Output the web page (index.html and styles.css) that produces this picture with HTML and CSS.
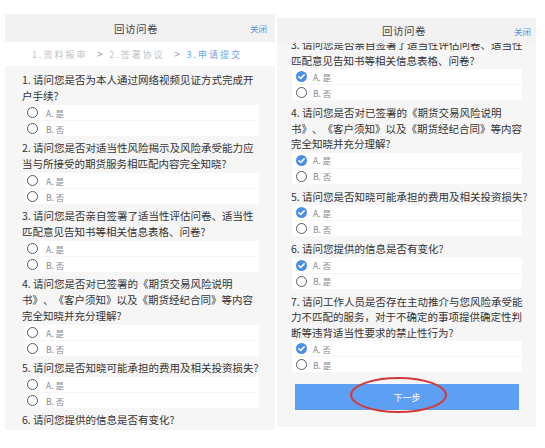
FILE: index.html
```html
<!DOCTYPE html>
<html lang="zh-CN">
<head>
<meta charset="utf-8">
<title>回访问卷</title>
<link rel="stylesheet" href="styles.css">
</head>
<body>
<div class="page">
  <section class="phone phone-left">
    <header class="nav">
      <span></span>
      <span class="nav-title">回访问卷</span>
      <span class="nav-close">关闭</span>
    </header>
    <div class="steps">
      <span class="step">1.资料报审</span>
      <span class="arrow">&gt;</span>
      <span class="step">2.签署协议</span>
      <span class="arrow">&gt;</span>
      <span class="step step-active">3.申请提交</span>
    </div>
    <div class="body">
      <div class="q">
        <p class="q-text">1. 请问您是否为本人通过网络视频见证方式完成开<br>户手续?</p>
        <div class="opt"><span class="radio"></span><span class="opt-label">A. 是</span></div>
        <div class="opt"><span class="radio"></span><span class="opt-label">B. 否</span></div>
      </div>
      <div class="q">
        <p class="q-text">2. 请问您是否对适当性风险揭示及风险承受能力应<br>当与所接受的期货服务相匹配内容完全知晓?</p>
        <div class="opt"><span class="radio"></span><span class="opt-label">A. 是</span></div>
        <div class="opt"><span class="radio"></span><span class="opt-label">B. 否</span></div>
      </div>
      <div class="q">
        <p class="q-text">3. 请问您是否亲自签署了适当性评估问卷、适当性<br>匹配意见告知书等相关信息表格、问卷?</p>
        <div class="opt"><span class="radio"></span><span class="opt-label">A. 是</span></div>
        <div class="opt"><span class="radio"></span><span class="opt-label">B. 否</span></div>
      </div>
      <div class="q">
        <p class="q-text">4. 请问您是否对已签署的《期货交易风险说明<br>书》、《客户须知》以及《期货经纪合同》等内容<br>完全知晓并充分理解?</p>
        <div class="opt"><span class="radio"></span><span class="opt-label">A. 是</span></div>
        <div class="opt"><span class="radio"></span><span class="opt-label">B. 否</span></div>
      </div>
      <div class="q">
        <p class="q-text">5. 请问您是否知晓可能承担的费用及相关投资损失?</p>
        <div class="opt"><span class="radio"></span><span class="opt-label">A. 是</span></div>
        <div class="opt"><span class="radio"></span><span class="opt-label">B. 否</span></div>
      </div>
      <div class="q">
        <p class="q-text">6. 请问您提供的信息是否有变化?</p>
      </div>
    </div>
  </section>

  <section class="phone phone-right">
    <header class="nav">
      <span></span>
      <span class="nav-title">回访问卷</span>
      <span class="nav-close">关闭</span>
    </header>
    <div class="body">
      <div class="scroll">
        <div class="q">
          <p class="q-text">3. 请问您是否亲自签署了适当性评估问卷、适当性<br>匹配意见告知书等相关信息表格、问卷?</p>
          <div class="opt"><span class="radio checked"><svg viewBox="0 0 10 10"><path d="M2.6 5.2 L4.3 6.8 L7.4 3.5"/></svg></span><span class="opt-label">A. 是</span></div>
          <div class="opt"><span class="radio"></span><span class="opt-label">B. 否</span></div>
        </div>
        <div class="q">
          <p class="q-text">4. 请问您是否对已签署的《期货交易风险说明<br>书》、《客户须知》以及《期货经纪合同》等内容<br>完全知晓并充分理解?</p>
          <div class="opt"><span class="radio checked"><svg viewBox="0 0 10 10"><path d="M2.6 5.2 L4.3 6.8 L7.4 3.5"/></svg></span><span class="opt-label">A. 是</span></div>
          <div class="opt"><span class="radio"></span><span class="opt-label">B. 否</span></div>
        </div>
        <div class="q">
          <p class="q-text">5. 请问您是否知晓可能承担的费用及相关投资损失?</p>
          <div class="opt"><span class="radio checked"><svg viewBox="0 0 10 10"><path d="M2.6 5.2 L4.3 6.8 L7.4 3.5"/></svg></span><span class="opt-label">A. 是</span></div>
          <div class="opt"><span class="radio"></span><span class="opt-label">B. 否</span></div>
        </div>
        <div class="q">
          <p class="q-text">6. 请问您提供的信息是否有变化?</p>
          <div class="opt"><span class="radio checked"><svg viewBox="0 0 10 10"><path d="M2.6 5.2 L4.3 6.8 L7.4 3.5"/></svg></span><span class="opt-label">A. 否</span></div>
          <div class="opt"><span class="radio"></span><span class="opt-label">B. 是</span></div>
        </div>
        <div class="q">
          <p class="q-text">7. 请问工作人员是否存在主动推介与您风险承受能<br>力不匹配的服务，对于不确定的事项提供确定性判<br>断等违背适当性要求的禁止性行为?</p>
          <div class="opt"><span class="radio checked"><svg viewBox="0 0 10 10"><path d="M2.6 5.2 L4.3 6.8 L7.4 3.5"/></svg></span><span class="opt-label">A. 否</span></div>
          <div class="opt"><span class="radio"></span><span class="opt-label">B. 是</span></div>
        </div>
        <div class="btn-next">下一步<span class="mark"></span></div>
      </div>
    </div>
  </section>
</div>
</body>
</html>
```

FILE: styles.css
```css
* { box-sizing: border-box; }

html, body {
  margin: 0;
  padding: 0;
  background: #ffffff;
}

body {
  width: 545px;
  height: 448px;
  overflow: hidden;
  font-family: "Noto Sans CJK SC", "Noto Sans", sans-serif;
  color: #333333;
  text-spacing-trim: space-all;
}

.page {
  display: flex;
  align-items: flex-start;
}

.phone {
  display: flex;
  flex-direction: column;
  overflow: hidden;
  background: #f6f6f6;
}

.phone-left {
  margin-left: 5px;
  margin-top: 14px;
  width: 270px;
  height: 416px;
}

.phone-right {
  margin-left: 2px;
  margin-top: 18px;
  width: 259px;
  height: 409px;
}

/* nav bar */
.nav {
  display: grid;
  grid-template-columns: 1fr auto 1fr;
  align-items: center;
  background: #f2f2f2;
  flex: none;
}

.phone-left .nav { height: 28px; padding-right: 8px; }
.phone-right .nav { height: 25px; padding-right: 5px; }

.nav-title {
  font-size: 10.5px;
  color: #444444;
  letter-spacing: 0.5px;
}

.nav-close {
  justify-self: end;
  font-size: 8.5px;
  color: #5a95de;
}

/* steps */
.steps {
  flex: none;
  height: 24px;
  background: #ffffff;
  display: flex;
  align-items: center;
  justify-content: center;
  padding-right: 6px;
  font-size: 9px;
  letter-spacing: 2px;
  color: #c4c4c4;
}

.step-active { color: #6aa4e6; }

.arrow {
  font-weight: bold;
  color: #b0b0b0;
  margin: 0 6px 0 9px;
  letter-spacing: 0;
  font-family: "DejaVu Sans", sans-serif;
  font-size: 8px;
}

/* body */
.body {
  flex: 1;
  overflow: hidden;
}

.phone-left .body {
  padding: 4.5px 18px 0 17px;
}

.phone-right .body {
  padding: 0 18px 0 14px;
}

.phone-right .scroll {
  margin-top: -7.75px;
}

.q {
  padding: 1.5px 0;
}

.phone-right .q { padding: 2px 0; }

.q-text {
  margin: 0;
  font-size: 10.5px;
  line-height: 16px;
  color: #333333;
  white-space: nowrap;
  text-spacing-trim: space-all;
  font-kerning: none;
}

.phone-right .q-text { line-height: 15.5px; }

.opt {
  height: 15px;
  margin: 1px 0;
  background: #ffffff;
  display: flex;
  align-items: center;
  font-size: 8.5px;
  color: #8a8a8a;
}

.phone-left .opt {
  margin-left: 3px;
  margin-right: -2px;
  padding-left: 1.5px;
}

.phone-right .opt {
  margin-left: 1px;
  margin-right: -4px;
  padding-left: 3.5px;
}

.radio {
  flex: none;
  width: 11px;
  height: 11px;
  border-radius: 50%;
  border: 1.6px solid #5a5a5a;
  display: flex;
  align-items: center;
  justify-content: center;
}

.radio.checked {
  border: none;
  background: #4a8ee8;
}

.radio svg {
  width: 11px;
  height: 11px;
  fill: none;
  stroke: #ffffff;
  stroke-width: 1.4;
  stroke-linecap: round;
  stroke-linejoin: round;
}

.phone-left .opt-label { margin-left: 8.5px; }
.phone-right .opt-label { margin-left: 6.5px; }

/* button */
.btn-next {
  position: relative;
  margin: 9px -1px 0 4px;
  height: 26px;
  background: #5d9ff2;
  color: #ffffff;
  font-size: 9px;
  display: flex;
  align-items: center;
  justify-content: center;
}

.mark {
  position: absolute;
  left: 55px;
  top: -7px;
  width: 97px;
  height: 36px;
  border: 2px solid #d23a3a;
  border-radius: 50%;
}
```
